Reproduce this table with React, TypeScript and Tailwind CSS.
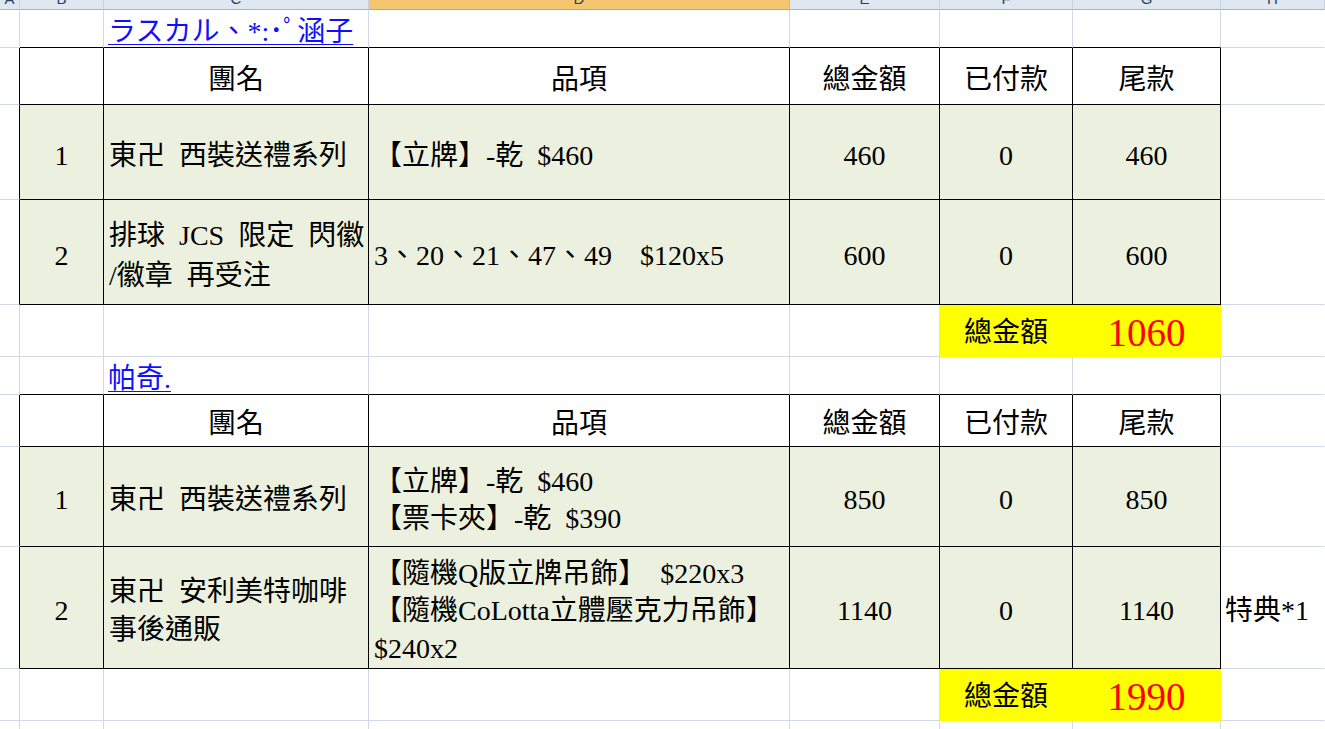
import type { ReactNode } from "react";

type CellProps = {
  w: string;
  r?: string;
  b?: string;
  bg?: string;
  className?: string;
  children?: ReactNode;
};

function Cell({ w, r = "border-r-[#d0d7e5]", b = "border-b-[#d0d7e5]", bg = "", className = "", children }: CellProps) {
  return (
    <div className={`shrink-0 h-full border-r border-b ${w} ${r} ${b} ${bg} ${className}`}>
      {children}
    </div>
  );
}

const A = "w-[20px]";
const B = "w-[84px]";
const C = "w-[265px]";
const D = "w-[421px]";
const E = "w-[150px]";
const F = "w-[133px]";
const G = "w-[148px]";
const H = "flex-1";

const BLK_R = "border-r-black";
const BLK_B = "border-b-black";
const GREEN = "bg-[#ebf1de]";
const center = "flex items-center justify-center pt-[7px]";
const left = "flex flex-col justify-center pl-[5px] pt-[7px]";

function ColHeader() {
  const cols = [
    { w: A, l: "A" },
    { w: B, l: "B" },
    { w: C, l: "C" },
    { w: D, l: "D", on: true },
    { w: E, l: "E" },
    { w: F, l: "F" },
    { w: G, l: "G" },
    { w: H, l: "H" },
  ];
  return (
    <div className="flex h-[10px] font-['Liberation_Sans',sans-serif]">
      {cols.map((c) => (
        <div
          key={c.l}
          className={`shrink-0 h-full overflow-hidden flex items-end justify-center pb-[3px] border-r border-b text-[15px] leading-none text-[#27415f] ${c.w} ${
            c.on ? "bg-[#f5c56f] border-b-[#f09a35] border-r-[#e0b26a]" : "bg-[#dfe7f1] border-b-[#9eb6ce] border-r-[#c5d2e2]"
          }`}
        >
          {c.l}
        </div>
      ))}
    </div>
  );
}

function LinkRow({ name }: { name: string }) {
  return (
    <div className="flex h-[38px]">
      <Cell w={A} />
      <Cell w={B} b={BLK_B} />
      <Cell w={C} b={BLK_B} className="flex items-end pl-[4px] overflow-visible whitespace-nowrap">
        <span className="text-[#1010ff] underline underline-offset-[3px] decoration-1 leading-[30px]">{name}</span>
      </Cell>
      <Cell w={D} b={BLK_B} />
      <Cell w={E} b={BLK_B} />
      <Cell w={F} b={BLK_B} />
      <Cell w={G} b={BLK_B} />
      <Cell w={H} r="border-r-transparent" />
    </div>
  );
}

function HeaderRow({ h }: { h: string }) {
  return (
    <div className={`flex ${h}`}>
      <Cell w={A} r={BLK_R} />
      <Cell w={B} r={BLK_R} b={BLK_B} />
      <Cell w={C} r={BLK_R} b={BLK_B} className={center}>團名</Cell>
      <Cell w={D} r={BLK_R} b={BLK_B} className={center}>品項</Cell>
      <Cell w={E} r={BLK_R} b={BLK_B} className={center}>總金額</Cell>
      <Cell w={F} r={BLK_R} b={BLK_B} className={center}>已付款</Cell>
      <Cell w={G} r={BLK_R} b={BLK_B} className={center}>尾款</Cell>
      <Cell w={H} r="border-r-transparent" />
    </div>
  );
}

type Item = {
  no: string;
  group: string[];
  items: string[];
  total: string;
  paid: string;
  rest: string;
  note?: string;
};

function DataRow({ h, item, lh = "leading-[38px]" }: { h: string; item: Item; lh?: string }) {
  return (
    <div className={`flex ${h}`}>
      <Cell w={A} r={BLK_R} />
      <Cell w={B} r={BLK_R} b={BLK_B} bg={GREEN} className={center}>{item.no}</Cell>
      <Cell w={C} r={BLK_R} b={BLK_B} bg={GREEN} className={`${left} ${lh}`}>
        {item.group.map((g) => (
          <div key={g} className="whitespace-pre">{g}</div>
        ))}
      </Cell>
      <Cell w={D} r={BLK_R} b={BLK_B} bg={GREEN} className={`${left} leading-[37.5px]`}>
        {item.items.map((g) => (
          <div key={g} className="whitespace-pre">{g}</div>
        ))}
      </Cell>
      <Cell w={E} r={BLK_R} b={BLK_B} bg={GREEN} className={center}>{item.total}</Cell>
      <Cell w={F} r={BLK_R} b={BLK_B} bg={GREEN} className={center}>{item.paid}</Cell>
      <Cell w={G} r={BLK_R} b={BLK_B} bg={GREEN} className={center}>{item.rest}</Cell>
      <Cell w={H} r="border-r-transparent" className="flex items-center pl-[4px] pt-[7px] whitespace-nowrap">
        {item.note}
      </Cell>
    </div>
  );
}

function TotalRow({ sum }: { sum: string }) {
  return (
    <div className="flex h-[52px]">
      <Cell w={A} />
      <Cell w={B} />
      <Cell w={C} />
      <Cell w={D} />
      <Cell w={E} r="border-r-[#ffff00]" />
      <Cell w={F} r="border-r-[#ffff00]" b="border-b-[#ffff00]" bg="bg-[#ffff00]" className="flex items-center justify-center pt-[4px]">
        總金額
      </Cell>
      <Cell w={G} r="border-r-[#ffff00]" b="border-b-[#ffff00]" bg="bg-[#ffff00]" className="flex items-center justify-center pt-[4px]">
        <span className="text-[39px] text-[#ff0000] leading-none">{sum}</span>
      </Cell>
      <Cell w={H} r="border-r-transparent" />
    </div>
  );
}

const first: Item[] = [
  { no: "1", group: ["東卍  西裝送禮系列"], items: ["【立牌】-乾  $460"], total: "460", paid: "0", rest: "460" },
  {
    no: "2",
    group: ["排球  JCS  限定  閃徽", "/徽章  再受注"],
    items: ["3、20、21、47、49    $120x5"],
    total: "600",
    paid: "0",
    rest: "600",
  },
];

const second: Item[] = [
  {
    no: "1",
    group: ["東卍  西裝送禮系列"],
    items: ["【立牌】-乾  $460", "【票卡夾】-乾  $390"],
    total: "850",
    paid: "0",
    rest: "850",
  },
  {
    no: "2",
    group: ["東卍  安利美特咖啡", "事後通販"],
    items: ["【隨機Q版立牌吊飾】  $220x3", "【隨機CoLotta立體壓克力吊飾】", "$240x2"],
    total: "1140",
    paid: "0",
    rest: "1140",
    note: "特典*1",
  },
];

export default function App() {
  return (
    <div className="w-[1325px] h-[729px] overflow-hidden bg-white text-black text-[28px] font-['Liberation_Serif','Noto_Sans_CJK_TC',serif]">
      <ColHeader />
      <LinkRow name="ラスカル、*:･ﾟ涵子" />
      <HeaderRow h="h-[57px]" />
      <DataRow h="h-[95px]" item={first[0]} />
      <DataRow h="h-[105px]" item={first[1]} lh="leading-[40px]" />
      <TotalRow sum="1060" />
      <LinkRow name="帕奇." />
      <HeaderRow h="h-[52px]" />
      <DataRow h="h-[100px]" item={second[0]} />
      <DataRow h="h-[122px]" item={second[1]} />
      <TotalRow sum="1990" />
      <div className="flex h-[20px]">
        <Cell w={A} />
        <Cell w={B} />
        <Cell w={C} />
        <Cell w={D} />
        <Cell w={E} />
        <Cell w={F} />
        <Cell w={G} />
        <Cell w={H} r="border-r-transparent" />
      </div>
    </div>
  );
}
